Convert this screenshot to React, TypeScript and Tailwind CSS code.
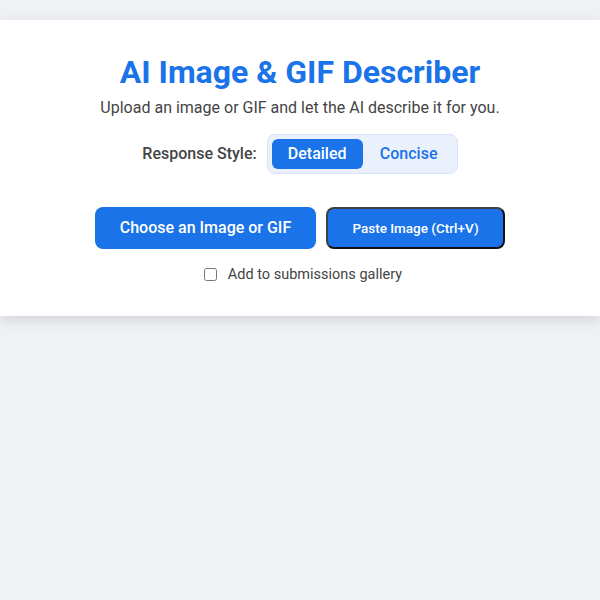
import { useState } from "react";

export default function App() {
  const [style, setStyle] = useState<"detailed" | "concise">("detailed");
  const [gallery, setGallery] = useState(false);

  return (
    <div className="min-h-[600px] bg-[#f0f1f5] pt-5 font-['Roboto',sans-serif]">
      <div className="flex flex-col items-center bg-white pb-[30px] pt-[33px] shadow-[0_4px_12px_rgba(0,0,0,0.12)]">
        <h1 className="text-[32px] font-bold leading-[38px] text-[#1a73e8]">AI Image &amp; GIF Describer</h1>
        <p className="mt-[7px] text-[16px] leading-5 text-[#444]">
          Upload an image or GIF and let the AI describe it for you.
        </p>

        <div className="mt-[16px] flex items-center gap-[10px]">
          <span className="text-[16px] font-medium text-[#444]">Response Style:</span>
          <div className="flex h-10 items-center gap-[2px] rounded-lg border border-[#d6e4fb] bg-[#eaf1fd] px-1">
            <button
              onClick={() => setStyle("detailed")}
              className={`h-[30px] w-[91px] rounded-md text-[16px] font-medium ${
                style === "detailed" ? "bg-[#1a73e8] text-white" : "text-[#1a73e8]"
              }`}
            >
              Detailed
            </button>
            <button
              onClick={() => setStyle("concise")}
              className={`h-[30px] w-[88px] rounded-md text-[16px] font-medium ${
                style === "concise" ? "bg-[#1a73e8] text-white" : "text-[#1a73e8]"
              }`}
            >
              Concise
            </button>
          </div>
        </div>

        <div className="mt-[33px] flex gap-[10px]">
          <button className="h-[42px] w-[221px] rounded-lg bg-[#1a73e8] text-[16px] font-medium text-white">
            Choose an Image or GIF
          </button>
          <button className="h-[42px] w-[179px] rounded-lg border-2 border-[#3c4043] border-b-[#111] border-r-[#111] bg-[#1a73e8] text-[13.5px] font-medium text-white">
            Paste Image (Ctrl+V)
          </button>
        </div>

        <label className="mt-[15px] flex items-center gap-[11px] pl-[6px] text-[14.5px] text-[#444]">
          <input
            type="checkbox"
            checked={gallery}
            onChange={(e) => setGallery(e.target.checked)}
            className="h-[13px] w-[13px]"
          />
          Add to submissions gallery
        </label>
      </div>
    </div>
  );
}
